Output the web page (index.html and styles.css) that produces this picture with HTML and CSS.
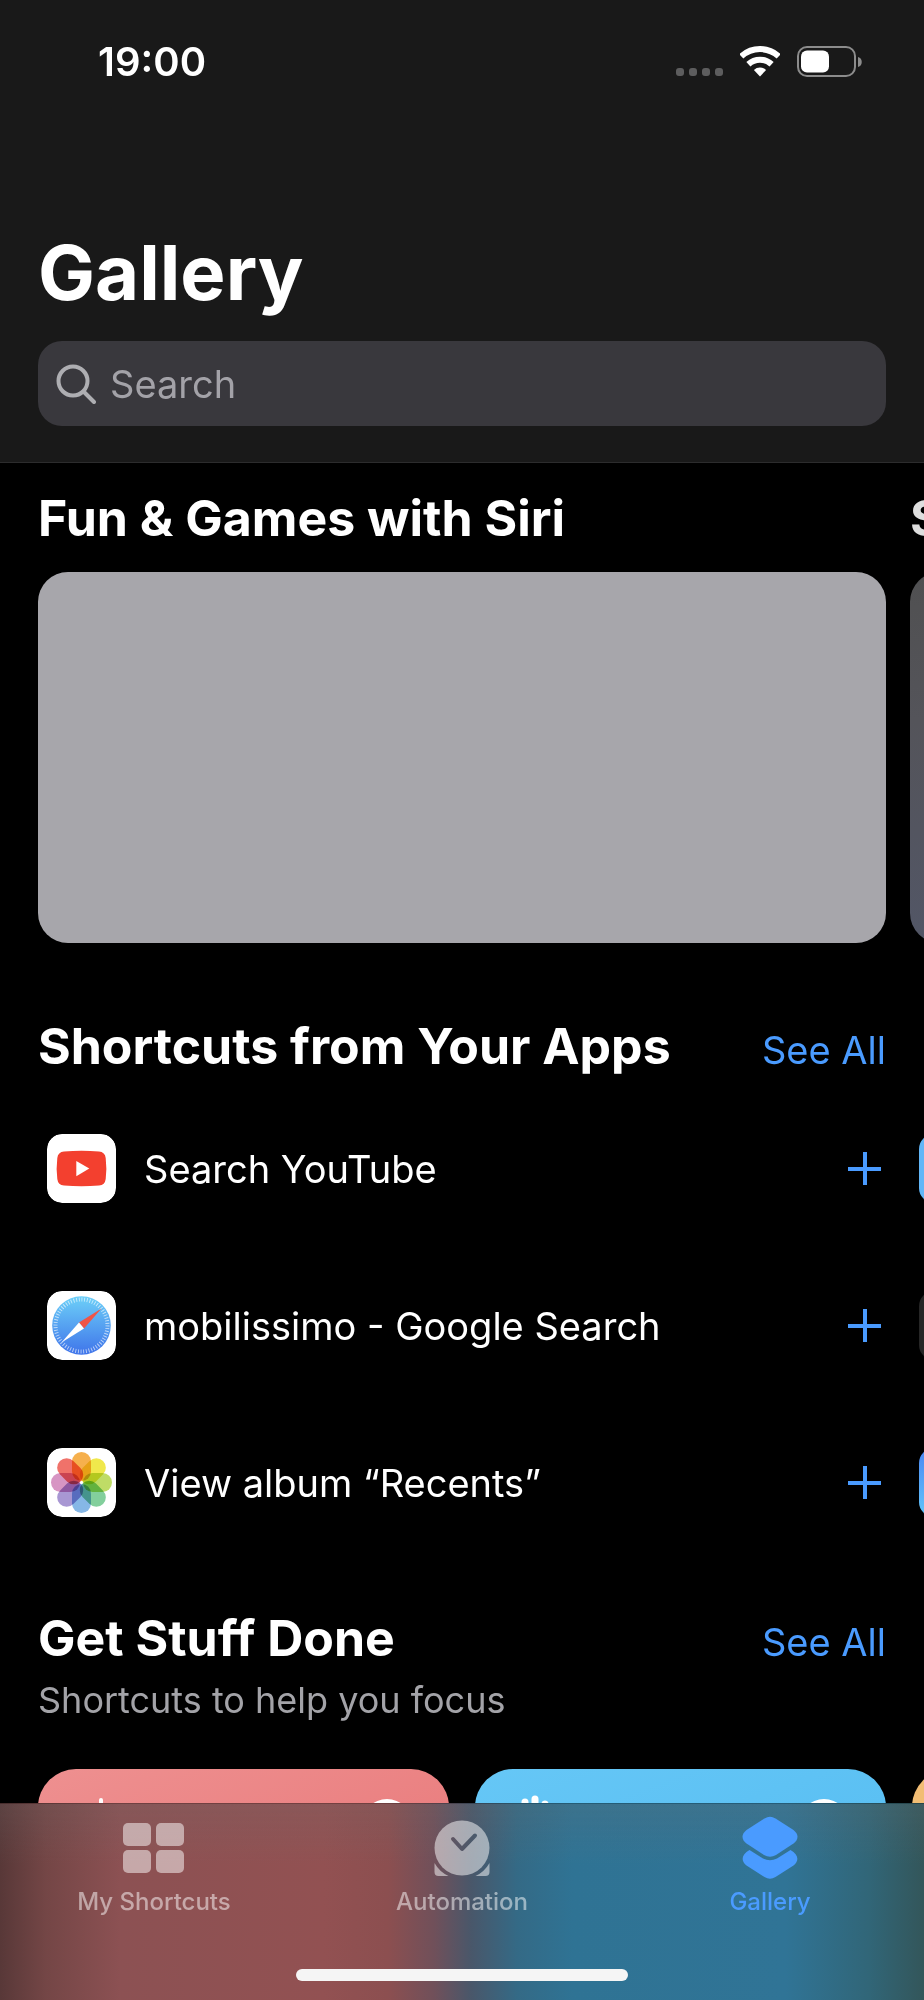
FILE: index.html
```html
<!DOCTYPE html>
<html lang="en">
<head>
    <meta charset="UTF-8">
    <meta name="viewport" content="width=device-width, initial-scale=1">
    <title>Gallery</title>
    <link rel="stylesheet" href="styles.css">
</head>
<body>
<div class="app">
    <header class="header">
        <div class="status-bar">
            <span class="time">19:00</span>
            <div class="status-icons">
                <div class="signal"><i></i><i></i><i></i><i></i></div>
                <svg width="40" height="31" viewBox="0 0 40 31" fill="none" stroke="#fff" stroke-width="6">
                    <path d="M1.3 10.4A27.5 27.5 0 0 1 38.7 10.4"/>
                    <path d="M8.4 18.2A17 17 0 0 1 31.6 18.2"/>
                    <path d="M20 30.5L13.9 24A9 9 0 0 1 26.1 24Z" fill="#fff" stroke="none"/>
                </svg>
                <svg width="65" height="31" viewBox="0 0 65 31">
                    <rect x="1" y="1" width="57" height="29" rx="9" fill="none" stroke="#8c8c8c" stroke-width="2"/>
                    <rect x="4" y="4.500" width="28" height="22" rx="6" fill="#fff"/>
                    <path d="M61 11C66 12 66 20 61 21Z" fill="#8c8c8c"/>
                </svg>
            </div>
        </div>
        <h1>Gallery</h1>
        <label class="search">
            <svg width="40" height="40" viewBox="0 0 40 40" fill="none" stroke="#aeaeb2" stroke-width="4" stroke-linecap="round">
                <circle cx="17" cy="17" r="14.500"/>
                <path d="M27.500 27.500L38 38"/>
            </svg>
            <input type="search" placeholder="Search" aria-label="Search">
        </label>
    </header>

    <main class="content">
        <div class="carousel">
            <section class="page">
                <h2>Fun &amp; Games with Siri</h2>
                <div class="banner"></div>
            </section>
            <section class="page next">
                <h2>S</h2>
                <div class="banner"></div>
            </section>
        </div>

        <section class="apps">
            <div class="section-head">
                <h2>Shortcuts from Your Apps</h2>
                <a href="#">See All</a>
            </div>
            <div class="carousel">
                <ul class="page list">
                    <li>
                        <svg class="app-icon" viewBox="0 0 69 69">
                            <rect width="69" height="69" rx="15" fill="#fff"/>
                            <path d="M17 17.500Q34.500 16 52 17.500Q58 18 58.700 24Q60 34.500 58.700 45Q58 51 52 51.500Q34.500 53 17 51.500Q11 51 10.300 45Q9 34.500 10.300 24Q11 18 17 17.500Z" fill="#f3402f"/>
                            <path d="M29.300 27V42.300L42.300 34.600Z" fill="#fff"/>
                        </svg>
                        <span>Search YouTube</span>
                        <button class="add" aria-label="Add Search YouTube"></button>
                    </li>
                    <li>
                        <svg class="app-icon" viewBox="0 0 69 69">
                            <defs>
                                <linearGradient id="sky" x2="0" y2="1">
                                    <stop offset="0" stop-color="#6dd0f8"/>
                                    <stop offset="1" stop-color="#3f74ea"/>
                                </linearGradient>
                            </defs>
                            <rect width="69" height="69" rx="15" fill="#fff"/>
                            <circle cx="34.500" cy="34.500" r="29.300" fill="url(#sky)"/>
                            <circle cx="34.500" cy="34.500" r="26" fill="none" stroke="#fff" stroke-opacity=".65" stroke-width="4" pathLength="180" stroke-dasharray="1 2"/>
                            <path d="M54.500 17.500L32 31.500L37 37.500Z" fill="#ef5548"/>
                            <path d="M14.500 51.500L32 31.500L37 37.500Z" fill="#fff"/>
                        </svg>
                        <span>mobilissimo - Google Search</span>
                        <button class="add" aria-label="Add mobilissimo - Google Search"></button>
                    </li>
                    <li>
                        <svg class="app-icon" viewBox="0 0 69 69">
                            <rect width="69" height="69" rx="15" fill="#fff"/>
                            <g class="petals" transform="translate(34.500 34.500)">
                                <rect x="-9.500" y="-30.500" width="19" height="29" rx="9.500" fill="#f6b04d"/>
                                <rect x="-9.500" y="-30.500" width="19" height="29" rx="9.500" fill="#f0e84c" transform="rotate(45)"/>
                                <rect x="-9.500" y="-30.500" width="19" height="29" rx="9.500" fill="#bfdc66" transform="rotate(90)"/>
                                <rect x="-9.500" y="-30.500" width="19" height="29" rx="9.500" fill="#83cf9c" transform="rotate(135)"/>
                                <rect x="-9.500" y="-30.500" width="19" height="29" rx="9.500" fill="#86b7e6" transform="rotate(180)"/>
                                <rect x="-9.500" y="-30.500" width="19" height="29" rx="9.500" fill="#a897d3" transform="rotate(225)"/>
                                <rect x="-9.500" y="-30.500" width="19" height="29" rx="9.500" fill="#d795c3" transform="rotate(270)"/>
                                <rect x="-9.500" y="-30.500" width="19" height="29" rx="9.500" fill="#f0726a" transform="rotate(315)"/>
                            </g>
                        </svg>
                        <span>View album “Recents”</span>
                        <button class="add" aria-label="Add View album Recents"></button>
                    </li>
                </ul>
                <ul class="page list">
                    <li><div class="app-icon sky"></div></li>
                    <li><div class="app-icon dark"></div></li>
                    <li><div class="app-icon blue"></div></li>
                </ul>
            </div>
        </section>

        <section class="focus">
            <div class="section-head">
                <h2>Get Stuff Done</h2>
                <a href="#">See All</a>
            </div>
            <p>Shortcuts to help you focus</p>
            <div class="cards">
                <div class="card red">
                    <svg width="60" height="60" viewBox="0 0 60 60" stroke="#fff" stroke-width="4" stroke-linecap="round">
                        <path d="M29 5V55M19 18V42M39 18V42M9 26V34M49 26V34"/>
                    </svg>
                    <span class="dot"></span>
                </div>
                <div class="card cyan">
                    <svg width="60" height="60" viewBox="0 0 60 60" stroke="#fff" stroke-width="7" stroke-linecap="round">
                        <path d="M16 7V40M26 4V40M36 9V40"/>
                    </svg>
                    <span class="dot"></span>
                </div>
                <div class="card orange"></div>
            </div>
        </section>
    </main>

    <nav class="tab-bar">
        <div class="tabs">
            <a href="#" class="tab">
                <svg width="62" height="64" viewBox="0 0 62 64" fill="currentColor">
                    <rect x="0" y="7" width="28" height="23" rx="5"/>
                    <rect x="33" y="7" width="28" height="23" rx="5"/>
                    <rect x="0" y="34" width="28" height="23" rx="5"/>
                    <rect x="33" y="34" width="28" height="23" rx="5"/>
                </svg>
                <span>My Shortcuts</span>
            </a>
            <a href="#" class="tab">
                <svg width="56" height="64" viewBox="0 0 56 64" fill="currentColor">
                    <mask id="hands">
                        <rect width="56" height="64" fill="#fff"/>
                        <path d="M19 23L28 33L41 19.500" fill="none" stroke="#000" stroke-width="4" stroke-linecap="round" stroke-linejoin="round"/>
                    </mask>
                    <circle cx="28" cy="32" r="27.500" mask="url(#hands)"/>
                    <path d="M.5 47A31 31 0 0 0 14.500 60H4.500Q.5 60 .5 56Z"/>
                    <path d="M55.500 47A31 31 0 0 1 41.500 60H51.500Q55.500 60 55.500 56Z"/>
                </svg>
                <span>Automation</span>
            </a>
            <a href="#" class="tab active">
                <svg width="56" height="64" viewBox="0 0 56 64" fill="currentColor">
                    <path d="M22.500 2.500Q28 -.8 33.500 2.500L51.500 14Q59.500 20.500 51.500 27.500L34 39Q28 42.500 22 39L4.500 27.500Q-3.500 20.500 4.500 14Z"/>
                    <path d="M7.500 34L21 42.500Q28 46 35 42.500L48.500 34C56.500 38.500 57.500 44.500 51.500 49.500L33.500 61Q28 64.500 22.500 61L4.500 49.500C-1.500 44.500 -.5 38.500 7.500 34Z"/>
                </svg>
                <span>Gallery</span>
            </a>
        </div>
        <div class="home-indicator"></div>
    </nav>
</div>
</body>
</html>
```
FILE: styles.css
```css
* {
    box-sizing: border-box;
}

body {
    margin: 0;
    background-color: #000;
    color: #fff;
    font-family: Inter, "Liberation Sans", sans-serif;
    font-size: 38px;
}

h1, h2, p, ul {
    margin: 0;
    padding: 0;
}

a {
    color: #4a9bff;
    text-decoration: none;
}

.app {
    display: flex;
    flex-direction: column;
    height: 100vh;
}

/* Header */
.header {
    padding: 38px 38px 36px;
    background-color: #191919;
    border-bottom: 1px solid #2c2c2d;
}

.status-bar {
    display: flex;
    justify-content: space-between;
    align-items: center;
    padding: 0 24px 0 60px;
    margin-bottom: 138px;
}

.time {
    font-size: 40px;
    font-weight: 600;
    line-height: 48px;
}

.status-icons {
    display: flex;
    align-items: flex-end;
    gap: 17px;
    padding-bottom: 2px;
}

.signal {
    display: flex;
    gap: 5px;
    padding-bottom: 1px;
}

.signal i {
    width: 8px;
    height: 8px;
    border-radius: 3px;
    background-color: #5d5d5e;
}

h1 {
    font-size: 76px;
    font-weight: 700;
    line-height: 96px;
}

.search {
    display: flex;
    align-items: center;
    gap: 14px;
    height: 85px;
    margin-top: 21px;
    padding: 0 18px;
    border-radius: 24px;
    background-color: #39383d;
}

.search input {
    flex: 1;
    min-width: 0;
    padding: 0;
    border: none;
    outline: none;
    background: none;
    color: #fff;
    font: inherit;
}

.search input::placeholder {
    color: #a3a2a8;
    opacity: 1;
}

/* Scrolling content */
.content {
    flex: 1;
    min-height: 0;
    padding: 25px 38px 0;
    overflow: hidden;
}

h2 {
    font-size: 50px;
    font-weight: 700;
    line-height: 60px;
    white-space: nowrap;
}

.carousel {
    display: flex;
    gap: 24px;
}

.page {
    flex: 0 0 100%;
}

.banner {
    height: 371px;
    margin-top: 24px;
    border-radius: 30px;
    background-color: #a7a6ab;
}

.next h2 {
    color: #dedede;
}

.next .banner {
    background: linear-gradient(#505051, #54545a 40%, #525666);
}

.section-head {
    display: flex;
    justify-content: space-between;
    align-items: baseline;
}

.apps {
    margin-top: 73px;
}

.list {
    margin-top: 14px;
    list-style: none;
}

.list li {
    display: flex;
    align-items: center;
    gap: 28px;
    height: 157px;
    padding: 0 5px 0 9px;
}

.list span {
    flex: 1;
}

.app-icon {
    width: 69px;
    height: 69px;
    border-radius: 15px;
}

.petals rect {
    mix-blend-mode: multiply;
}

.sky {
    background-color: #62b6f7;
}

.dark {
    background-color: #262626;
}

.blue {
    background: linear-gradient(#4a86f3, #62c6fa);
}

.add {
    width: 33px;
    height: 33px;
    padding: 0;
    border: none;
    background:
        linear-gradient(#4a9bff, #4a9bff) center / 33px 4px no-repeat,
        linear-gradient(#4a9bff, #4a9bff) center / 4px 33px no-repeat;
    cursor: pointer;
}

.focus {
    margin-top: 47px;
}

.focus p {
    margin-top: 10px;
    color: #a3a3a8;
    font-size: 36px;
    line-height: 44px;
}

.cards {
    display: flex;
    gap: 26px;
    margin-top: 47px;
}

.card {
    display: flex;
    flex: 0 0 calc((100% - 26px) / 2);
    justify-content: space-between;
    align-items: flex-start;
    height: 240px;
    padding: 26px 37px 26px 34px;
    border-radius: 38px;
}

.dot {
    width: 50px;
    height: 50px;
    margin-top: 4px;
    border-radius: 50%;
    background-color: #fff;
}

.red {
    background: linear-gradient(160deg, #ee9090, #e66e70);
}

.cyan {
    background: linear-gradient(160deg, #66c7f6, #4eb8f0);
}

.orange {
    background-color: #f2bd74;
}

/* Tab bar */
.tab-bar {
    padding: 12px 0 19px;
    border-top: 1px solid rgba(0, 0, 0, 0.2);
    background:
        linear-gradient(rgba(110, 110, 110, 0.2), transparent 60px),
        linear-gradient(to right, #583838, #744646 5%, #8c5153 13%, #925152 35%, #8c4f50 42%, #70505a 47%, #49576a 51%, #346a86 56%, #2f7394 62%, #307496 85%, #316678 94%, #33565a);
}

.tabs {
    display: flex;
}

.tab {
    display: flex;
    flex: 1;
    flex-direction: column;
    align-items: center;
    gap: 8px;
    color: rgba(255, 255, 255, 0.5);
    font-size: 24px;
    font-weight: 500;
    line-height: 28px;
}

.tab.active {
    color: #4a9bff;
}

.home-indicator {
    width: 36%;
    height: 12px;
    margin: 53px auto 0;
    border-radius: 6px;
    background-color: #f5f5f5;
}
```
